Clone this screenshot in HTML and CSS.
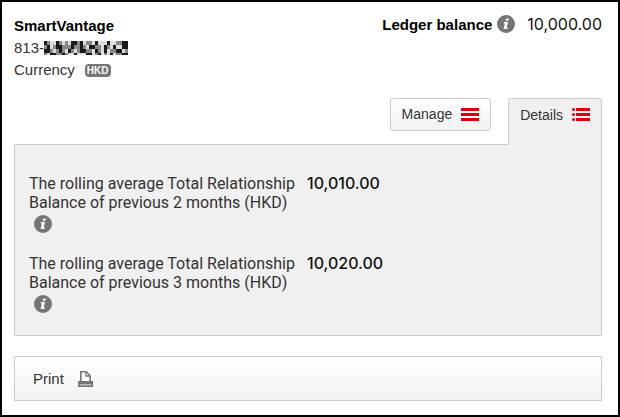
FILE: index.html
```html
<!DOCTYPE html>
<html lang="en">
<head>
  <meta charset="UTF-8">
  <meta name="viewport" content="width=device-width, initial-scale=1.0">
  <title>SmartVantage</title>
  <link rel="stylesheet" href="styles.css">
</head>
<body>

<svg class="defs" aria-hidden="true">
  <symbol id="info" viewBox="0 0 18 18">
    <circle cx="9" cy="9" r="9" fill="#767676"/>
    <path d="M9.3 3.5h2.5l-.5 2.2H8.8zM7 7h4l-1.4 5.6h1.2l-.3 1.3H6.6l1.3-5.5H6.7z" fill="#fff"/>
  </symbol>
</svg>

<main class="account">
  <header class="summary">
    <div>
      <h1>SmartVantage</h1>
      <div class="number">813-<svg class="mask" viewBox="0 0 84 14" role="img" aria-label="hidden digits">
        <path d="M0 0h84v14H0z" fill="#ddd"/>
        <g fill="none" stroke="#888" stroke-width="4">
          <path d="M3 2h81" stroke-dasharray="3 6 6 3 3 9"/>
          <path d="M0 6h84" stroke-dasharray="6 3 3 6 9 3"/>
          <path d="M6 10h78" stroke-dasharray="3 3 9 6 3 3"/>
          <path d="M0 14h84" stroke-dasharray="3 9 6 3 3 6"/>
        </g>
        <g fill="none" stroke="#1a1a1a" stroke-width="4">
          <path d="M0 2h84" stroke-dasharray="3 9 3 12 6 3 3 12"/>
          <path d="M3 6h81" stroke-dasharray="3 6 6 9 3 6"/>
          <path d="M0 10h84" stroke-dasharray="6 9 3 6 3 9"/>
          <path d="M6 14h78" stroke-dasharray="6 6 3 9 3 9"/>
        </g>
      </svg></div>
      <div class="currency">Currency <span class="badge">HKD</span></div>
    </div>
    <div class="ledger">
      <strong>Ledger balance</strong>
      <svg class="info"><use href="#info"/></svg>
      <span class="amount">10,000.00</span>
    </div>
  </header>

  <nav class="tabs">
    <button type="button" class="manage">Manage
      <svg width="18" height="14" fill="#db0011"><path d="M0 0h18v3H0zM0 5h18v3H0zM0 10h18v3H0z"/></svg>
    </button>
    <button type="button" class="details">Details
      <svg width="18" height="14" fill="#db0011"><path d="M4 0h14v3H4zM4 5h14v3H4zM4 10h14v3H4z"/><circle cx="1.5" cy="1.5" r="1.5"/><circle cx="1.5" cy="6.5" r="1.5"/><circle cx="1.5" cy="11.5" r="1.5"/></svg>
    </button>
  </nav>

  <dl class="panel">
    <dt>The rolling average Total Relationship Balance of previous 2 months (HKD) <svg class="info"><use href="#info"/></svg></dt>
    <dd class="amount">10,010.00</dd>
    <dt>The rolling average Total Relationship Balance of previous 3 months (HKD) <svg class="info"><use href="#info"/></svg></dt>
    <dd class="amount">10,020.00</dd>
  </dl>

  <div class="actions">
    <button type="button" class="print">Print
      <svg width="15" height="16"><path d="M2.8 11V.8h5.4l4 4V11" fill="#fff" stroke="#767676" stroke-width="1.6"/><path d="M8 1v4h4" fill="none" stroke="#767676" stroke-width="1.3"/><path d="M0 10h15v6H0z" fill="#767676"/><path d="M1.5 13h12v1.5h-12z" fill="#bbb"/></svg>
    </button>
  </div>
</main>

</body>
</html>
```
FILE: styles.css
```css
* {
  box-sizing: border-box;
}
body {
  margin: 0;
  font-family: "Liberation Sans", Arial, sans-serif;
  font-size: 15px;
  line-height: 19px;
  color: #333;
  background: #fff;
}
.defs {
  display: none;
}
.account {
  min-height: 100vh;
  padding: 13px 16px 14px 12px;
  border: 2px solid #000;
}
.summary {
  display: flex;
  justify-content: space-between;
}
h1 {
  margin: 0;
  font-size: 15px;
  line-height: 22px;
  color: #000;
}
.number,
.currency {
  display: flex;
  align-items: center;
  line-height: 22px;
}
.mask {
  width: 84px;
  height: 14px;
}
.badge {
  margin-left: 10px;
  padding: 0 2px;
  border-radius: 4px;
  background: #767676;
  color: #fff;
  font-size: 10px;
  font-weight: bold;
  line-height: 13px;
}
.ledger {
  display: flex;
  align-items: center;
  height: 18px;
  color: #000;
}
.info {
  width: 18px;
  height: 18px;
}
.ledger .info {
  margin: 0 12px 0 5px;
}
.amount {
  font-family: Inter, sans-serif;
  font-size: 16px;
  font-weight: 500;
  color: #111;
}
.ledger .amount {
  font-weight: 400;
}
button {
  display: flex;
  align-items: center;
  font: inherit;
  color: inherit;
  cursor: pointer;
}
.tabs {
  display: flex;
  justify-content: flex-end;
  align-items: flex-start;
  gap: 17px;
  margin-top: 17px;
}
.tabs button {
  gap: 9px;
  padding: 0 11px;
  border: 1px solid #ccc;
  border-radius: 3px;
  font-size: 14px;
}
.tabs .manage {
  height: 33px;
  background: linear-gradient(#fff, #f2f2f2);
}
/* the open tab runs into the panel below it */
.tabs .details {
  position: relative;
  height: 47px;
  margin-bottom: -1px;
  padding-bottom: 14px;
  border-bottom: 0;
  border-radius: 3px 3px 0 0;
  background: #f0f0f0;
}
.panel {
  display: grid;
  grid-template-columns: 266px 1fr;
  column-gap: 12px;
  row-gap: 21px;
  margin: 0;
  padding: 29px 14px 22px;
  border: 1px solid #ccc;
  background: #f0f0f0;
}
dt {
  font-family: Roboto, "Liberation Sans", sans-serif;
  font-size: 16px;
}
dd {
  margin: 0;
}
.panel .info {
  display: block;
  margin: 3px 0 0 5px;
}
.actions {
  margin-top: 20px;
  padding: 12px 18px;
  border: 1px solid #ccc;
  background: linear-gradient(#fff, #f2f2f2);
}
.print {
  gap: 14px;
  padding: 0;
  border: 0;
  background: none;
}
```
